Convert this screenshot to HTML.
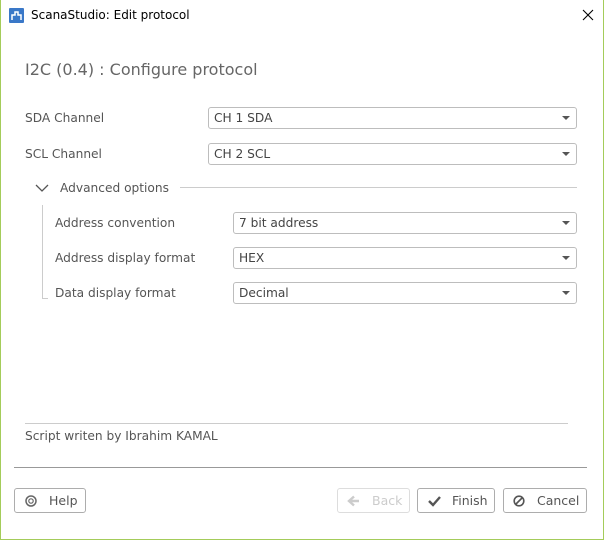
<!DOCTYPE html><html><head><style>
body{margin:0;width:604px;height:540px;overflow:hidden;background:#fff;font-family:"DejaVu Sans","Liberation Sans",sans-serif;position:relative}
.w{position:absolute;left:0;top:0;width:602px;height:539px;border:1px solid #a4cc5a;border-top:none;}
.a{position:absolute}
.t{font-size:12px;color:#000}
.lbl{font-size:12.2px;color:#555;position:absolute}
.cb{position:absolute;height:20px;border:1px solid #bdbdbd;border-radius:3px;background:#fff;font-size:12.2px;color:#444;line-height:20px;padding-left:5px;box-sizing:content-box}
.cb:after{content:"";position:absolute;right:6px;top:8px;border-left:4px solid transparent;border-right:4px solid transparent;border-top:4px solid #555}
.btn{position:absolute;top:488px;height:25px;border:1px solid #adadad;border-radius:3px;font-size:12.5px;color:#555;line-height:24px;box-sizing:border-box}
</style></head><body>
<div class="w"></div>
<svg class="a" style="left:9px;top:8px" width="15" height="15"><rect width="15" height="15" rx="1" fill="#3a78c8"/><path d="M3 12V7h3V4h3v3h3v5" stroke="#fff" fill="none" stroke-width="1.5"/></svg>
<div class="a t" style="left:31px;top:8px">ScanaStudio: Edit protocol</div>
<svg class="a" style="left:582px;top:9px" width="12" height="12"><path d="M1 1L11 11M11 1L1 11" stroke="#000" stroke-width="1.1"/></svg>
<div class="a" style="left:25px;top:60px;font-size:16px;color:#666">I2C (0.4) : Configure protocol</div>
<div class="lbl" style="left:25px;top:111px">SDA Channel</div>
<div class="cb" style="left:208px;top:107px;width:362px">CH 1 SDA</div>
<div class="lbl" style="left:25px;top:147px">SCL Channel</div>
<div class="cb" style="left:208px;top:143px;width:362px">CH 2 SCL</div>
<svg class="a" style="left:35px;top:183px" width="14" height="10"><path d="M1 2l6 6 6-6" stroke="#555" fill="none" stroke-width="1.3"/></svg>
<div class="lbl" style="left:60px;top:181px">Advanced options</div>
<div class="a" style="left:180px;top:187px;width:397px;height:1px;background:#ccc"></div>
<div class="a" style="left:42px;top:205px;width:1px;height:93px;background:#ccc"></div>
<div class="a" style="left:42px;top:298px;width:6px;height:1px;background:#ccc"></div>
<div class="lbl" style="left:55px;top:216px">Address convention</div>
<div class="cb" style="left:233px;top:212px;width:337px">7 bit address</div>
<div class="lbl" style="left:55px;top:251px">Address display format</div>
<div class="cb" style="left:233px;top:247px;width:337px">HEX</div>
<div class="lbl" style="left:55px;top:286px">Data display format</div>
<div class="cb" style="left:233px;top:282px;width:337px">Decimal</div>
<div class="a" style="left:25px;top:423px;width:543px;height:1px;background:#ccc"></div>
<div class="lbl" style="left:25px;top:429px">Script writen by Ibrahim KAMAL</div>
<div class="a" style="left:14px;top:467px;width:573px;height:1px;background:#999"></div>
<div class="btn" style="left:14px;width:72px"><svg class="a" style="left:10px;top:6px" width="12" height="12"><circle cx="6" cy="6" r="5" stroke="#666" fill="none" stroke-width="1.5"/><circle cx="6" cy="6" r="2.2" stroke="#666" fill="none" stroke-width="1.2"/></svg><span class="a" style="left:34px">Help</span></div>
<div class="btn" style="left:337px;width:73px;border-color:#ddd;color:#ccc"><svg class="a" style="left:9px;top:6px" width="13" height="12"><path d="M12 6H3M7 1.5L2 6l5 4.5" stroke="#ccc" fill="none" stroke-width="2.4"/></svg><span class="a" style="left:34px">Back</span></div>
<div class="btn" style="left:417px;width:78px"><svg class="a" style="left:10px;top:7px" width="13" height="11"><path d="M1 5l4 4 7-8" stroke="#555" fill="none" stroke-width="2.4"/></svg><span class="a" style="left:34px">Finish</span></div>
<div class="btn" style="left:503px;width:84px"><svg class="a" style="left:9px;top:6px" width="12" height="12"><circle cx="6" cy="6" r="4.8" stroke="#555" fill="none" stroke-width="1.6"/><path d="M3 9L9 3" stroke="#555" stroke-width="1.6"/></svg><span class="a" style="left:33px">Cancel</span></div>
</body></html>
